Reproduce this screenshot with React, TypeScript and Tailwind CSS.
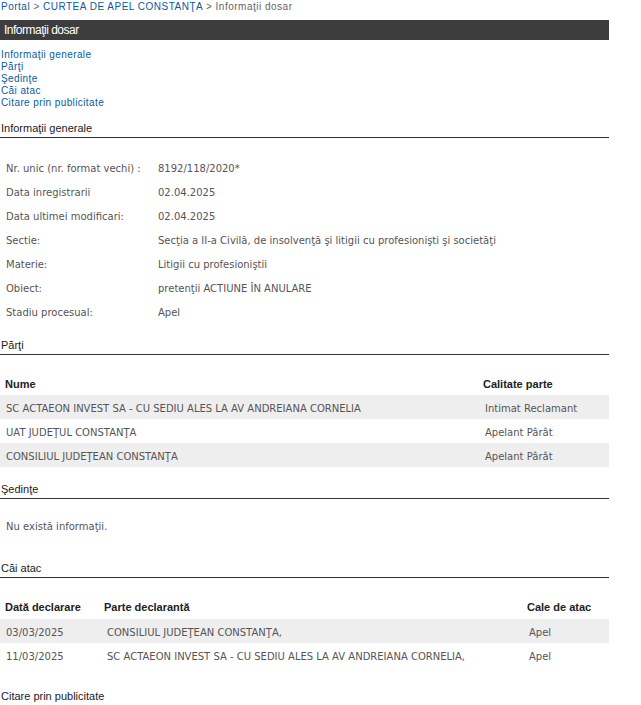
import React from "react";

const sans = "font-['Liberation_Sans',Arial,sans-serif]";
const tahoma = "font-['DejaVu_Sans',Verdana,sans-serif]";

const links = [
  "Informaţii generale",
  "Părţi",
  "Şedinţe",
  "Căi atac",
  "Citare prin publicitate",
];

const info: [string, string][] = [
  ["Nr. unic (nr. format vechi) :", "8192/118/2020*"],
  ["Data inregistrarii", "02.04.2025"],
  ["Data ultimei modificari:", "02.04.2025"],
  ["Sectie:", "Secţia a II-a Civilă, de insolvenţă şi litigii cu profesionişti şi societăţi"],
  ["Materie:", "Litigii cu profesioniştii"],
  ["Obiect:", "pretenţii ACTIUNE ÎN ANULARE"],
  ["Stadiu procesual:", "Apel"],
];

const parti: [string, string][] = [
  ["SC ACTAEON INVEST SA - CU SEDIU ALES LA AV ANDREIANA CORNELIA", "Intimat Reclamant"],
  ["UAT JUDEŢUL CONSTANŢA", "Apelant Pârât"],
  ["CONSILIUL JUDEŢEAN CONSTANŢA", "Apelant Pârât"],
];

const caiAtac: [string, string, string][] = [
  ["03/03/2025", "CONSILIUL JUDEŢEAN CONSTANŢA,", "Apel"],
  ["11/03/2025", "SC ACTAEON INVEST SA - CU SEDIU ALES LA AV ANDREIANA CORNELIA,", "Apel"],
];

function SectionTitle({ children, className = "" }: { children: React.ReactNode; className?: string }) {
  return (
    <div
      className={`border-b border-[#333] pb-[2px] pl-[1px] text-[11px] leading-[14px] text-[#222] ${sans} ${className}`}
    >
      {children}
    </div>
  );
}

export default function App() {
  return (
    <div className="min-h-screen bg-white">
      <div className="w-[609px]">
        {/* Breadcrumb */}
        <div className={`h-[20px] pl-[1px] pt-[1px] text-[10px] leading-[12px] tracking-[0.5px] ${sans}`}>
          <span className="text-[#0a5a9c]">Portal</span>
          <span className="text-[#666]"> &gt; </span>
          <span className="text-[#0a5a9c]">CURTEA DE APEL CONSTANŢA</span>
          <span className="text-[#666]"> &gt; Informaţii dosar</span>
        </div>

        {/* Header bar */}
        <div className={`h-[20px] bg-[#3d3d3d] pl-[4px] text-[12px] leading-[20px] tracking-[-0.5px] text-white ${sans}`}>
          Informaţii dosar
        </div>

        {/* Anchor links */}
        <div className={`mt-[9px] flex flex-col pl-[1px] text-[10px] leading-[12px] tracking-[0.4px] text-[#0a5a9c] ${sans}`}>
          {links.map((l) => (
            <a key={l} href="#" className="w-fit">
              {l}
            </a>
          ))}
        </div>

        {/* Informatii generale */}
        <SectionTitle className="mt-[12px]">Informaţii generale</SectionTitle>
        <div className={`mt-[18px] text-[10px] text-[#555] ${tahoma}`}>
          {info.map(([k, v]) => (
            <div key={k} className="flex h-[24px] items-center">
              <div className="w-[158px] shrink-0 pl-[6px]">{k}</div>
              <div>{v}</div>
            </div>
          ))}
        </div>

        {/* Parti */}
        <SectionTitle className="mt-[14px]">Părţi</SectionTitle>
        <div className={`mt-[16px] text-[10px] text-[#555] ${tahoma}`}>
          <div className={`flex h-[24px] items-center pt-[2px] text-[11px] font-bold text-[#222] ${sans}`}>
            <div className="w-[478px] shrink-0 pl-[5px]">Nume</div>
            <div className="pl-[5px]">Calitate parte</div>
          </div>
          {parti.map(([n, c], i) => (
            <div key={n} className={`flex h-[24px] items-center pt-[2px] ${i % 2 === 0 ? "bg-[#eeeeee]" : ""}`}>
              <div className="w-[478px] shrink-0 pl-[6px]">{n}</div>
              <div className="pl-[7px]">{c}</div>
            </div>
          ))}
        </div>

        {/* Sedinte */}
        <SectionTitle className="mt-[15px]">Şedinţe</SectionTitle>
        <div className={`mt-[15px] flex h-[24px] items-center pl-[6px] pt-[1px] text-[10px] text-[#555] ${tahoma}`}>
          Nu există informaţii.
        </div>

        {/* Cai atac */}
        <SectionTitle className="mt-[23px]">Căi atac</SectionTitle>
        <div className={`mt-[17px] text-[10px] text-[#555] ${tahoma}`}>
          <div className={`flex h-[24px] items-center text-[11px] font-bold text-[#222] ${sans}`}>
            <div className="w-[99px] shrink-0 pl-[5px]">Dată declarare</div>
            <div className="w-[423px] shrink-0 pl-[5px]">Parte declarantă</div>
            <div className="pl-[5px]">Cale de atac</div>
          </div>
          {caiAtac.map(([d, p, c], i) => (
            <div key={d} className={`flex h-[24px] items-center pt-[2px] ${i % 2 === 0 ? "bg-[#eeeeee]" : ""}`}>
              <div className="w-[99px] shrink-0 pl-[6px]">{d}</div>
              <div className="w-[423px] shrink-0 pl-[8px]">{p}</div>
              <div className="pl-[7px]">{c}</div>
            </div>
          ))}
        </div>

        {/* Citare prin publicitate */}
        <SectionTitle className="mt-[22px]">Citare prin publicitate</SectionTitle>
      </div>
    </div>
  );
}
